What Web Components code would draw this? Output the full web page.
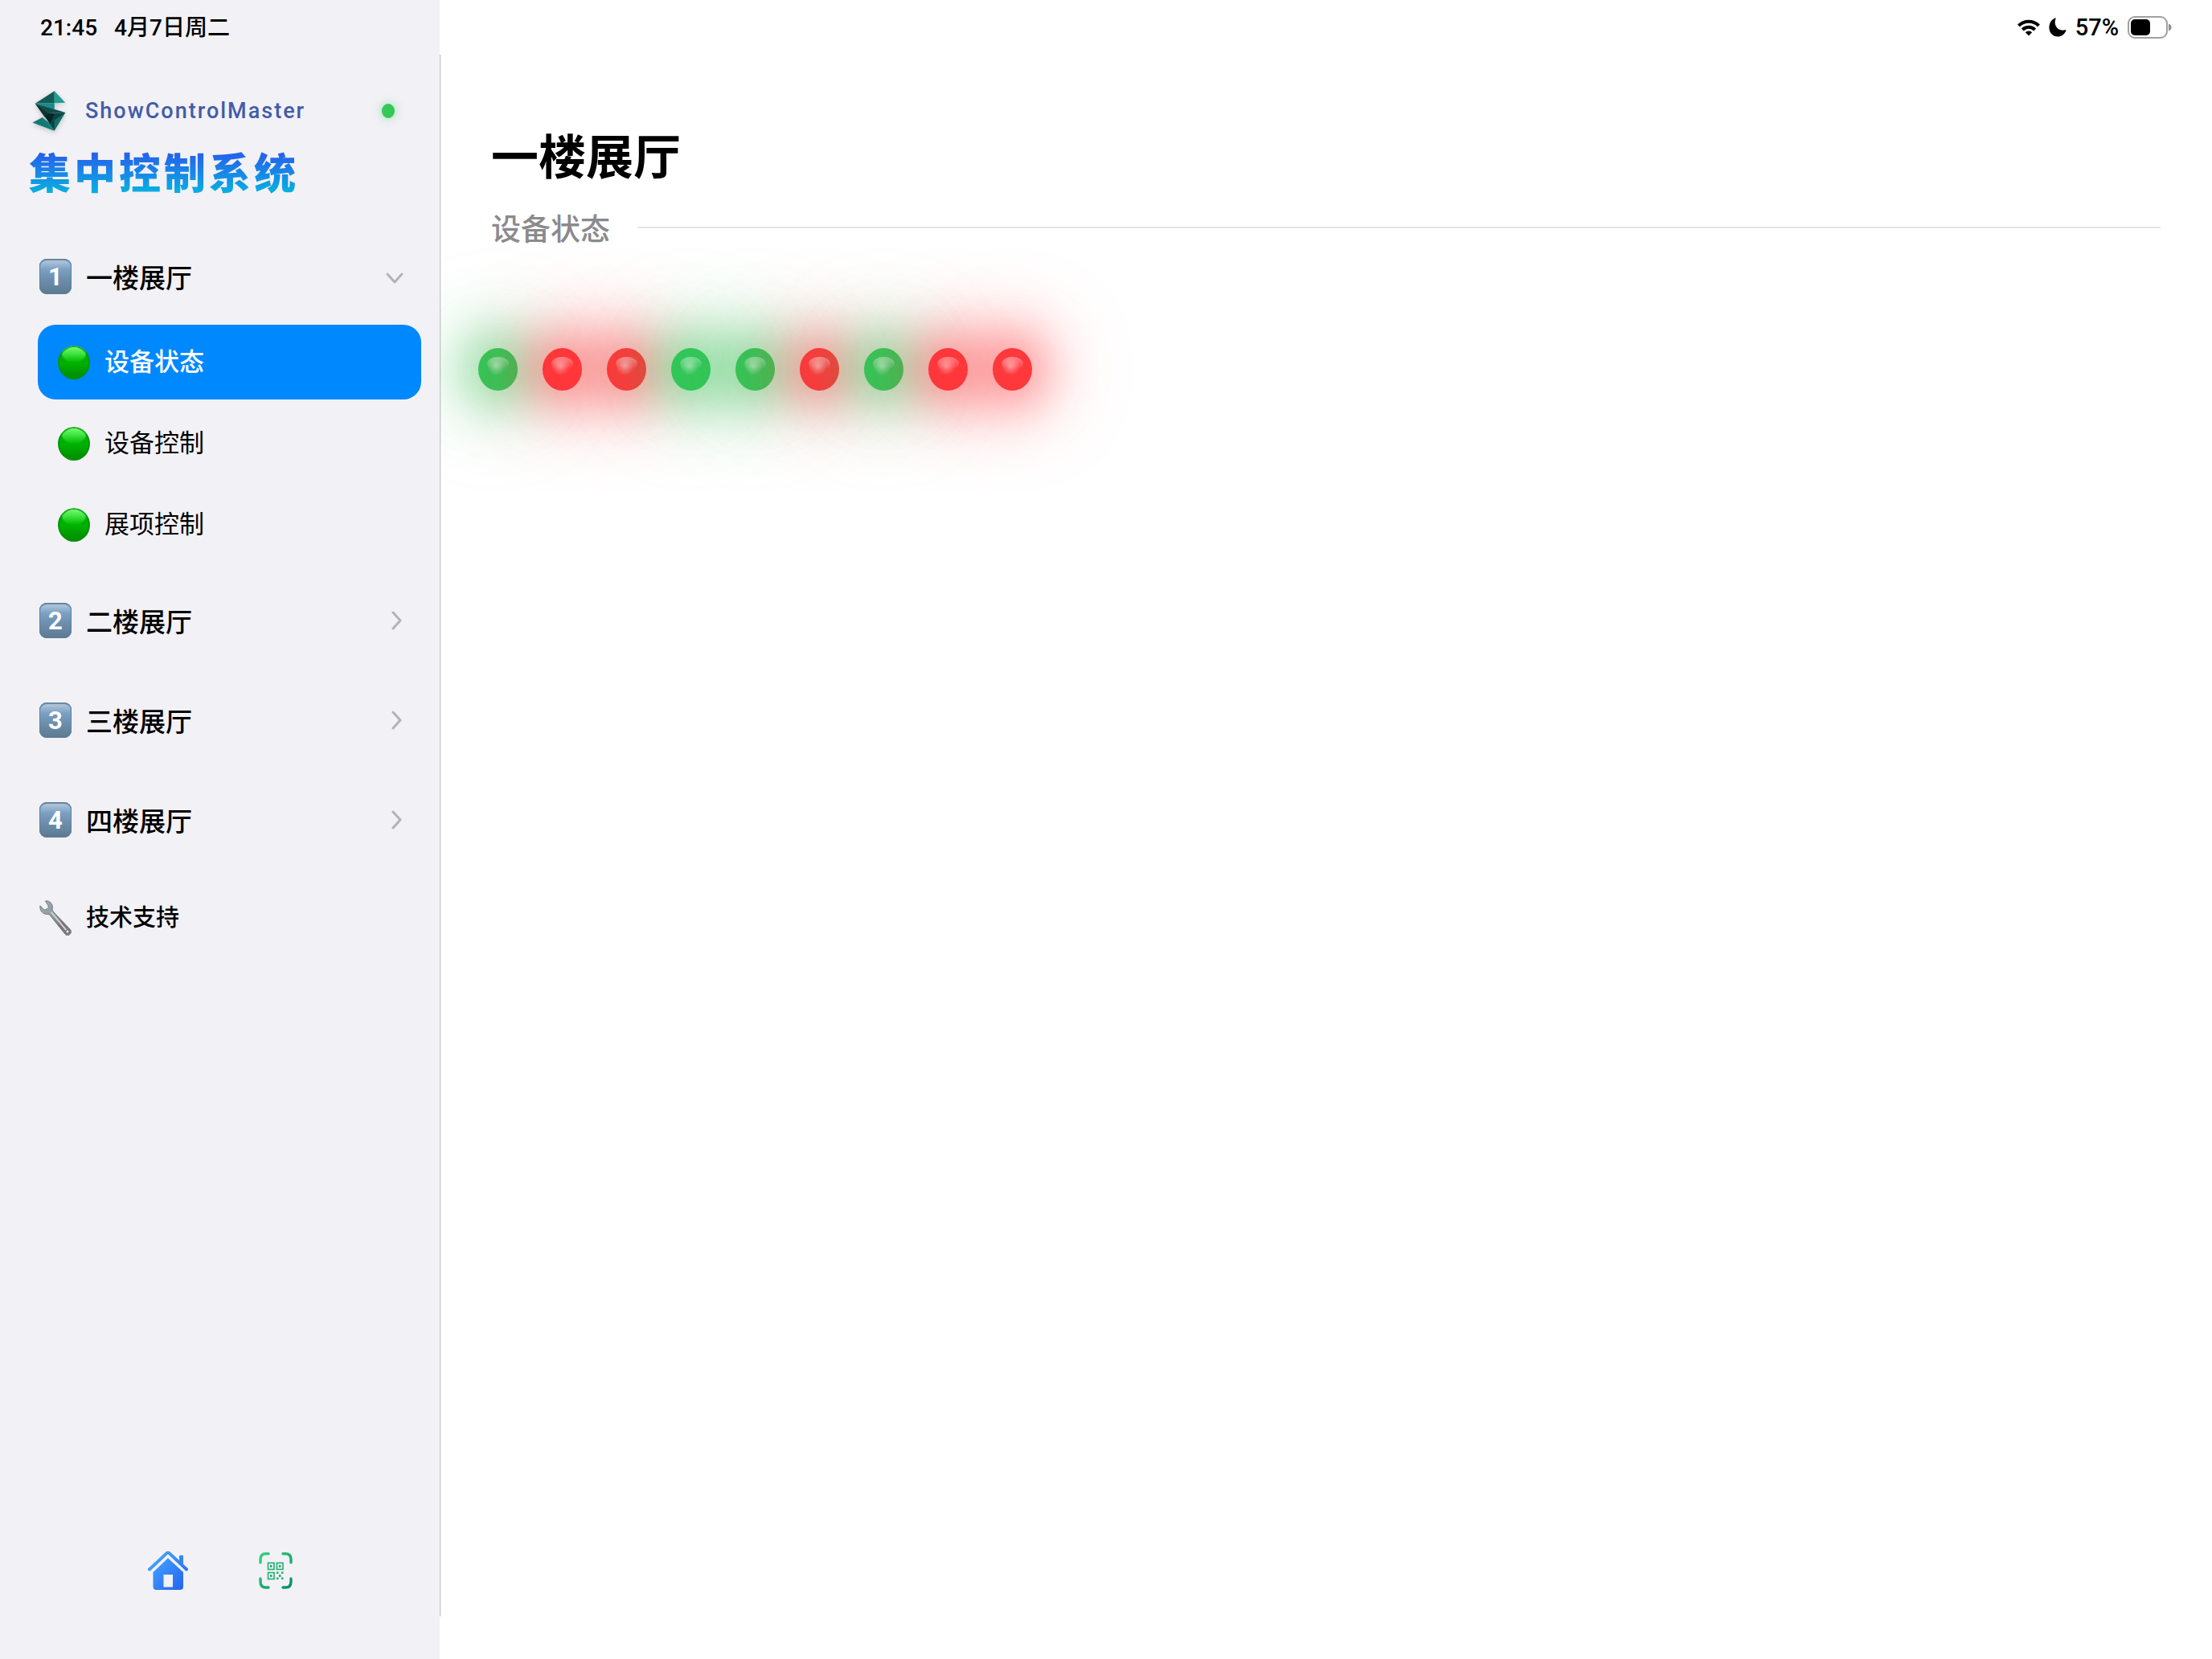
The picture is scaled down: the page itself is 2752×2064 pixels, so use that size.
<!DOCTYPE html>
<html lang="zh-CN">
<head>
<meta charset="utf-8">
<meta name="viewport" content="width=device-width, initial-scale=1">
<title>集中控制系统</title>
<style>
  html, body { margin: 0; height: 100%; }
  body {
    --bg-sidebar: #f2f1f6;
    --sidebar-w: 547px;
    --bar-h: 68px;
    --separator: #c8c8cb;
    --muted: #8a8a8d;
    --accent: #0088ff;
    font-family: Roboto, "Noto Sans CJK SC", sans-serif;
    color: #000;
    background: #fff;
  }
</style>
</head>
<body>

<app-shell>
  <status-bar slot="status" time="21:45" date="4月7日周二" battery="57"></status-bar>

  <side-bar slot="sidebar" brand="ShowControlMaster" heading="集中控制系统">
    <nav-group index="1" label="一楼展厅" open>
      <nav-item href="#f1-status" active>设备状态</nav-item>
      <nav-item href="#f1-device">设备控制</nav-item>
      <nav-item href="#f1-exhibit">展项控制</nav-item>
    </nav-group>
    <nav-group index="2" label="二楼展厅"></nav-group>
    <nav-group index="3" label="三楼展厅"></nav-group>
    <nav-group index="4" label="四楼展厅"></nav-group>
    <support-link href="#support">技术支持</support-link>
  </side-bar>

  <page-view heading="一楼展厅">
    <section-title>设备状态</section-title>
    <led-row states="on off off on on off on off off"></led-row>
  </page-view>
</app-shell>

<script>
// ─── Base ──────────────────────────────────────────────────────────────────

class BaseElement extends HTMLElement {
  constructor() {
    super();
    this.attachShadow({ mode: 'open' });
  }

  connectedCallback() {
    this.shadowRoot.innerHTML =
      `<style>*, *::before, *::after { box-sizing: border-box; } svg { display: block; }${this.css()}</style>${this.html()}`;
    this.bind();
  }

  css()  { return ''; }
  html() { return ''; }
  bind() {}
}

// ─── Shell ─────────────────────────────────────────────────────────────────

class AppShell extends BaseElement {
  css() {
    return `
      :host {
        display: grid;
        grid-template: var(--bar-h) 1fr / var(--sidebar-w) 1fr;
        min-height: 100vh;
        background: linear-gradient(to right, var(--bg-sidebar) var(--sidebar-w), transparent var(--sidebar-w));
      }
      ::slotted([slot="status"]) { grid-column: 1 / -1; }
    `;
  }

  html() {
    return `<slot name="status"></slot><slot name="sidebar"></slot><slot></slot>`;
  }
}
customElements.define('app-shell', AppShell);

// ─── Status bar ────────────────────────────────────────────────────────────

class StatusBar extends BaseElement {
  css() {
    return `
      :host {
        display: flex; align-items: center; justify-content: space-between;
        padding: 0 50px; font-size: 29px; line-height: 48px; font-weight: 500;
      }
      div { display: flex; align-items: center; }
      .clock { gap: 21px; padding-top: 2px; font-size: 28px; }
      .info { gap: 11px; }
    `;
  }

  html() {
    const level = Number(this.getAttribute('battery'));
    return `
      <div class="clock">
        <span>${this.getAttribute('time')}</span>
        <span>${this.getAttribute('date')}</span>
      </div>
      <div class="info">
        <svg width="28" height="22" viewBox="0 0 28 22" fill="none" stroke="#000" stroke-width="4">
          <path d="M1.5 9 A17.5 17.5 0 0 1 26.5 9"/>
          <path d="M6.3 14 A11 11 0 0 1 21.7 14"/>
          <path d="M14 21.5 L9.8 17.2 A6 6 0 0 1 18.2 17.2 Z" fill="#000" stroke="none"/>
        </svg>
        <svg width="22" height="24" viewBox="0 0 22 24">
          <path d="M7.6 0.4 C8.2 0 8.8 0.6 8.5 1.3 C5.4 9.3 11.2 17.6 20.2 15.3 C21.2 15 21.8 15.6 21.3 16.5 C19.2 21 15.5 23.6 11.2 23.6 C5 23.6 0.4 18.8 0.4 12.3 C0.4 7 3 2.6 7.6 0.4 Z"/>
        </svg>
        <span>${level}%</span>
        <svg width="55" height="28" viewBox="0 0 55 28">
          <rect x="1" y="1" width="48" height="26" rx="8" fill="none" stroke="#a0a0a0" stroke-width="2"/>
          <rect x="4" y="4" width="${Math.round(42 * level / 100)}" height="20" rx="5"/>
          <path d="M51 9.5 Q54.5 11 54.5 14 Q54.5 17 51 18.5 Z" fill="#8e8e8e"/>
        </svg>
      </div>`;
  }
}
customElements.define('status-bar', StatusBar);

// ─── Sidebar ───────────────────────────────────────────────────────────────

class SideBar extends BaseElement {
  css() {
    return `
      :host {
        display: flex; flex-direction: column;
        padding: 45px 23px 86px 36px;
      }
      header { display: flex; flex-direction: column; gap: 23px; }
      .brand { display: flex; align-items: center; height: 50px; padding: 0 33px 0 4px; gap: 24px; }
      .brand svg { filter: drop-shadow(0 2px 3px rgba(0, 0, 0, 0.2)); overflow: visible; }
      .name { flex: 1; font-size: 27px; line-height: 32px; font-weight: 500; letter-spacing: 2px; color: #425ca8; }
      .online { width: 16px; height: 18px; border-radius: 50%; background: #34c759; box-shadow: 0 0 12px rgba(52, 199, 89, 0.5); }
      h1 {
        margin: 0; align-self: flex-start; font-size: 52px; line-height: 64px; font-weight: 900; letter-spacing: 4px;
        background: linear-gradient(#2563eb 10%, #06b6e0 90%);
        -webkit-background-clip: text; background-clip: text; color: transparent;
      }
      nav { display: flex; flex-direction: column; gap: 4px; margin: 34px 0 0 11px; }
      footer { display: flex; align-items: center; justify-content: center; gap: 88px; margin-top: auto; padding-right: 13px; }
      button { padding: 0; border: 0; background: none; cursor: pointer; }
    `;
  }

  html() {
    return `
      <header>
        <div class="brand">
          <svg width="42" height="50" viewBox="60 38 125 152" aria-hidden="true">
            <path d="M143 39 L70 86 L143 84 Z" fill="#105c58"/>
            <path d="M143 39 L143 84 L184 83 Z" fill="#1fa091"/>
            <path d="M70 86 L143 84 L143 108 Z" fill="#168c8a"/>
            <path d="M60 158 L98 138 L142 189 Z" fill="#117a76"/>
            <path d="M96 138 L142 189 L126 160 Z" fill="#117a76"/>
            <path d="M70 86 L184 120 L120 123 Z" fill="#114c4a"/>
            <path d="M184 120 L120 123 L126 163 L142 189 Z" fill="#0c4542"/>
            <path d="M184 120 L143 150 L142 189 Z" fill="#13706b"/>
            <path d="M70 86 L120 123 L143 127 L126 163 Z" fill="#072523"/>
            <path d="M70 86 L120 123 L108 140 Z" fill="#0a3432"/>
          </svg>
          <span class="name">${this.getAttribute('brand')}</span>
          <span class="online"></span>
        </div>
        <h1>${this.getAttribute('heading')}</h1>
      </header>
      <nav><slot></slot></nav>
      <footer>
        <button aria-label="主页">
          <svg width="50" height="48" viewBox="0 0 50 48">
            <defs>
              <linearGradient id="home" gradientUnits="userSpaceOnUse" x1="4" y1="8" x2="44" y2="46">
                <stop offset="0" stop-color="#46a6ff"/><stop offset="1" stop-color="#2466f0"/>
              </linearGradient>
            </defs>
            <path d="M2 22.5 L23.4 2.4 Q25 1 26.6 2.4 L48 22.5" fill="none" stroke="url(#home)" stroke-width="4" stroke-linecap="round" stroke-linejoin="round"/>
            <path d="M39 6 Q39 5 40 5 L43 5 Q44 5 44 6 L44 19 L39 14.5 Z" fill="url(#home)"/>
            <path fill-rule="evenodd" d="M25 8.5 L44 26 L44 44 Q44 48 40 48 L10.5 48 Q6.5 48 6.5 44 L6.5 26 Z M19.5 29 L19.5 44.5 L31 44.5 L31 29 Z" fill="url(#home)"/>
          </svg>
        </button>
        <button aria-label="扫码">
          <svg width="42" height="46" viewBox="0 0 42 46">
            <defs>
              <linearGradient id="scan" gradientUnits="userSpaceOnUse" x1="2" y1="2" x2="40" y2="44">
                <stop offset="0" stop-color="#34d17f"/><stop offset="1" stop-color="#0d8f60"/>
              </linearGradient>
            </defs>
            <g fill="none" stroke="url(#scan)" stroke-width="3.4" stroke-linecap="round">
              <path d="M2 13 V9 Q2 2 9 2 H12 M30 2 H33 Q40 2 40 9 V13 M40 33 V37 Q40 44 33 44 H30 M12 44 H9 Q2 44 2 37 V33"/>
            </g>
            <g fill="none" stroke="#1eb271" stroke-width="1.6">
              <rect x="11.5" y="13.5" width="7.5" height="8"/>
              <rect x="22.5" y="13.5" width="7.5" height="8"/>
              <rect x="11.5" y="25.5" width="7.5" height="8"/>
            </g>
            <path fill="#1eb271" d="M14 16h2.5v3h-2.5z M25 16h2.5v3h-2.5z M14 28h2.5v3h-2.5z M22 24.5h2.5v2.5h-2.5z M28 24.5h2.5v2.5h-2.5z M25 28h2.5v3h-2.5z M22 31.5h2.5v2.5h-2.5z M28 31.5h2.5v2.5h-2.5z"/>
          </svg>
        </button>
      </footer>`;
  }
}
customElements.define('side-bar', SideBar);

class NavGroup extends BaseElement {
  css() {
    return `
      :host { display: block; }
      button {
        display: flex; align-items: center; gap: 18px;
        width: 100%; height: 120px; padding: 0 21px 0 2px;
        border: 0; background: none; color: inherit; cursor: pointer;
        font: 500 33px/48px "Noto Sans CJK SC", sans-serif; text-align: left;
      }
      .keycap {
        width: 40px; height: 44px; border-radius: 9px;
        background: linear-gradient(#bccfdd, #7ba0c3 30%, #7093b3 50%, #5b7990);
        box-shadow: inset 0 0 0 1px #5f809c, inset 0 2px 1px #6688a5;
        color: #fff; font: 700 31px/45px Roboto, sans-serif; text-align: center;
      }
      .label { flex: 1; }
      svg { width: 24px; height: 24px; fill: none; stroke: #b3b3b7; stroke-width: 3; stroke-linecap: round; stroke-linejoin: round; }
      .items { display: flex; flex-direction: column; gap: 8px; padding-bottom: 9px; }
      :host(:not([open])) .items { display: none; }
    `;
  }

  html() {
    const open = this.hasAttribute('open');
    return `
      <button aria-expanded="${open}">
        <span class="keycap">${this.getAttribute('index')}</span>
        <span class="label">${this.getAttribute('label')}</span>
        <svg viewBox="0 0 24 24"><path d="${open ? 'M3 9 L12 19 L21 9' : 'M10 2 L19 12 L10 22'}"/></svg>
      </button>
      <div class="items"><slot></slot></div>`;
  }

  bind() {
    this.shadowRoot.querySelector('button').addEventListener('click', () => {
      this.toggleAttribute('open');
      this.connectedCallback();
    });
  }
}
customElements.define('nav-group', NavGroup);

class NavItem extends BaseElement {
  css() {
    return `
      :host { display: block; }
      a {
        display: flex; align-items: center; gap: 18px;
        height: 93px; padding: 0 25px; border-radius: 22px;
        font-size: 31px; line-height: 48px; color: inherit; text-decoration: none;
      }
      :host([active]) a { background: var(--accent); color: #fff; font-weight: 500; }
      .ball {
        width: 40px; height: 42px; border-radius: 50%;
        background:
          radial-gradient(ellipse 17px 16px at 50% 32%, rgba(0, 190, 0, 0) 85%, #00ad05 100%) 0 0 / 100% 50% no-repeat,
          linear-gradient(#84ff80, #38e238 26%, #00b400 50%, #009300 85%);
        box-shadow: inset 0 0 0 2px rgba(0, 140, 10, 0.7);
      }
    `;
  }

  html() {
    return `<a href="${this.getAttribute('href')}"><span class="ball"></span><span><slot></slot></span></a>`;
  }
}
customElements.define('nav-item', NavItem);

class SupportLink extends BaseElement {
  css() {
    return `
      :host { display: block; }
      a {
        display: flex; align-items: center; gap: 18px;
        height: 116px; padding: 0 2px;
        font-size: 29px; line-height: 48px; font-weight: 500; color: inherit; text-decoration: none;
      }
    `;
  }

  html() {
    return `
      <a href="${this.getAttribute('href')}">
        <svg width="40" height="44" viewBox="0 0 40 44" aria-hidden="true">
          <defs>
            <linearGradient id="steel" x1="0" y1="0" x2="1" y2="1">
              <stop offset="0" stop-color="#9fb0bb"/><stop offset="0.45" stop-color="#8e989f"/>
              <stop offset="0.7" stop-color="#7b6b70"/><stop offset="1" stop-color="#8f8589"/>
            </linearGradient>
          </defs>
          <path d="M7.5 1 C11 0 16 3 16.3 8 C16.3 10.5 15.8 12 17 14 L38.5 36.5 C41 40 38 44 34.5 43.5 C33 43.3 32.2 42.5 31.3 41.3 L13.5 19 C12.5 17.5 11.5 17.5 9.5 17.5 C4 17.5 0 12.5 1 6.8 L4.8 11.2 C6 12.6 11 11 11.2 8.5 C11.3 7.2 10.8 6.2 10 5 Z" fill="url(#steel)" stroke="#6f787f"/>
          <path d="M14.5 14.5 L34 38" stroke="#c9cdd3" stroke-width="2" fill="none"/>
          <circle cx="35" cy="39" r="2.2" fill="#f2f1f6" stroke="#5c5155"/>
        </svg>
        <span><slot></slot></span>
      </a>`;
  }
}
customElements.define('support-link', SupportLink);

// ─── Page ──────────────────────────────────────────────────────────────────

class PageView extends BaseElement {
  css() {
    return `
      :host {
        display: flex; flex-direction: column; min-width: 0; overflow: hidden;
        padding: 93px 64px 0;
        background: linear-gradient(to right, var(--separator) 1px, #efeff0 1px) 0 0 / 2px calc(100% - 53px) no-repeat;
      }
      h2 { margin: 0 0 20px; font-size: 59px; line-height: 72px; font-weight: 700; }
    `;
  }

  html() {
    return `<h2>${this.getAttribute('heading')}</h2><slot></slot>`;
  }
}
customElements.define('page-view', PageView);

class SectionTitle extends BaseElement {
  css() {
    return `
      :host { display: flex; align-items: center; gap: 34px; }
      h3 { margin: 0; font: 500 37px/60px "Noto Sans CJK SC", sans-serif; color: var(--muted); }
      hr { flex: 1; height: 2px; margin: 0; border: 0; background: #e5e5e6; }
    `;
  }

  html() {
    return `<h3><slot></slot></h3><hr>`;
  }
}
customElements.define('section-title', SectionTitle);

class LedRow extends BaseElement {
  css() {
    return `
      :host { display: flex; flex-wrap: wrap; gap: 31px; margin: 120px 0 0 -16px; }
      .led {
        --rgb: 52, 199, 89;
        position: relative; width: 49px; height: 53px; border-radius: 50%;
        background: rgb(var(--rgb));
        box-shadow: 0 0 60px 17px rgba(var(--rgb), 0.5), 0 0 110px 24px rgba(var(--rgb), 0.28);
      }
      .off { --rgb: 255, 56, 60; }
      /* glass highlight */
      .led::before, .led::after { content: ""; position: absolute; border-radius: 50%; }
      .led::before {
        left: 11px; top: 11px; width: 27px; height: 17px;
        background: linear-gradient(rgba(255, 255, 255, 0.4), rgba(255, 255, 255, 0) 90%);
      }
      .led::after {
        left: 11px; top: 11px; width: 23px; height: 23px;
        background: radial-gradient(closest-side, rgba(255, 255, 255, 0.45), rgba(255, 255, 255, 0));
      }
    `;
  }

  html() {
    return this.getAttribute('states').split(' ')
      .map(s => `<span class="led ${s}"></span>`).join('');
  }
}
customElements.define('led-row', LedRow);
</script>
</body>
</html>
